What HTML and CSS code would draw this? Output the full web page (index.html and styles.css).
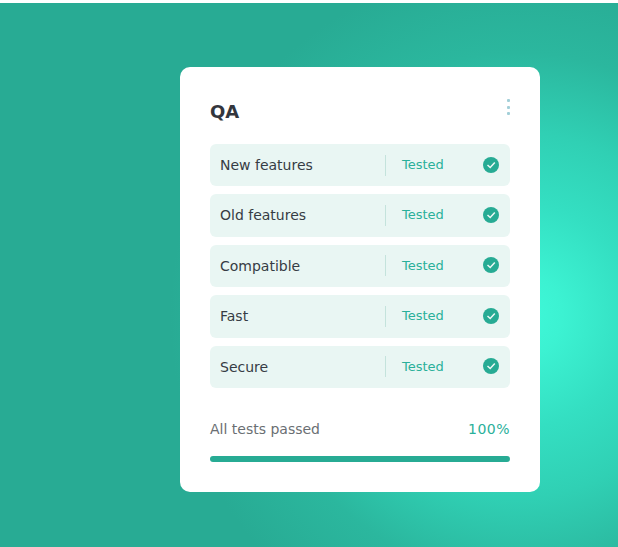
FILE: index.html
```html
<!DOCTYPE html>
<html lang="en">
<head>
  <meta charset="UTF-8">
  <title>QA</title>
  <link rel="stylesheet" href="styles.css">
</head>
<body>
  <div class="stage">
    <div class="card">
      <div class="card-head">
        <h2>QA</h2>
        <div class="dots"><span></span><span></span><span></span></div>
      </div>

      <div class="rows">
        <div class="row">
          <div class="name">New features</div>
          <div class="status">Tested</div>
          <svg class="check" viewBox="0 0 16 16"><circle cx="8" cy="8" r="8"/><path d="M4.5 8 7.2 10.5 11.8 5.6"/></svg>
        </div>
        <div class="row">
          <div class="name">Old features</div>
          <div class="status">Tested</div>
          <svg class="check" viewBox="0 0 16 16"><circle cx="8" cy="8" r="8"/><path d="M4.5 8 7.2 10.5 11.8 5.6"/></svg>
        </div>
        <div class="row">
          <div class="name">Compatible</div>
          <div class="status">Tested</div>
          <svg class="check" viewBox="0 0 16 16"><circle cx="8" cy="8" r="8"/><path d="M4.5 8 7.2 10.5 11.8 5.6"/></svg>
        </div>
        <div class="row">
          <div class="name">Fast</div>
          <div class="status">Tested</div>
          <svg class="check" viewBox="0 0 16 16"><circle cx="8" cy="8" r="8"/><path d="M4.5 8 7.2 10.5 11.8 5.6"/></svg>
        </div>
        <div class="row">
          <div class="name">Secure</div>
          <div class="status">Tested</div>
          <svg class="check" viewBox="0 0 16 16"><circle cx="8" cy="8" r="8"/><path d="M4.5 8 7.2 10.5 11.8 5.6"/></svg>
        </div>
      </div>

      <div class="summary">
        <span class="summary-label">All tests passed</span>
        <span class="summary-value">100%</span>
      </div>
      <div class="bar"></div>
    </div>
  </div>
</body>
</html>
```

FILE: styles.css
```css
html, body {
  margin: 0;
  height: 100%;
  overflow: hidden;
  background-color: #fff;
}

body {
  font-family: "DejaVu Sans", sans-serif;
  padding-top: 3px;
  box-sizing: border-box;
}

.stage {
  height: 544px;
  padding: 64px 0 0 180px;
  box-sizing: border-box;
  background: radial-gradient(circle 350px at 520px 312px, #3ff9d9 0%, #3cf2d2 12%, #34dfc2 32%, #30d0b4 52%, #2bb79e 75%, #28ab94 100%);
}

.card {
  width: 360px;
  height: 425px;
  padding: 30px;
  box-sizing: border-box;
  background-color: #fff;
  border-radius: 10px;
}

.card-head {
  display: flex;
  justify-content: space-between;
  height: 47px;
}

h2 {
  margin: 4px 0 0;
  font-size: 18px;
  line-height: 21px;
  font-weight: 700;
  color: #33363d;
}

.dots {
  display: flex;
  flex-direction: column;
  gap: 3.5px;
  margin-top: 2px;
}

.dots span {
  width: 3px;
  height: 3px;
  border-radius: 1px;
  background-color: #a3cfd8;
}

.rows {
  display: flex;
  flex-direction: column;
  gap: 8px;
}

.row {
  display: flex;
  align-items: center;
  height: 42.4px;
  padding: 0 11px 0 10px;
  box-sizing: border-box;
  background-color: #e9f6f3;
  border-radius: 6px;
}

.name {
  width: 165px;
  height: 20.4px;
  font-size: 14px;
  line-height: 21px;
  color: #363c44;
}

.status {
  flex: 1;
  height: 21px;
  padding: 0.3px 0 0 16px;
  box-sizing: border-box;
  border-left: 1px solid #c4e3dc;
  font-size: 13px;
  line-height: 19px;
  color: #2ab09a;
}

.check {
  width: 16px;
  height: 16px;
  margin-top: -1.2px;
}

.check circle {
  fill: #27ab94;
}

.check path {
  fill: none;
  stroke: #eef8f6;
  stroke-width: 1.5;
}

.summary {
  display: flex;
  justify-content: space-between;
  align-items: center;
  margin-top: 31px;
  height: 20px;
  font-size: 14px;
}

.summary-label {
  color: #6a6f73;
}

.summary-value {
  color: #2ab09a;
  letter-spacing: 0.5px;
}

.bar {
  height: 6px;
  margin-top: 17px;
  background-color: #27ab94;
  border-radius: 3px;
}
```
